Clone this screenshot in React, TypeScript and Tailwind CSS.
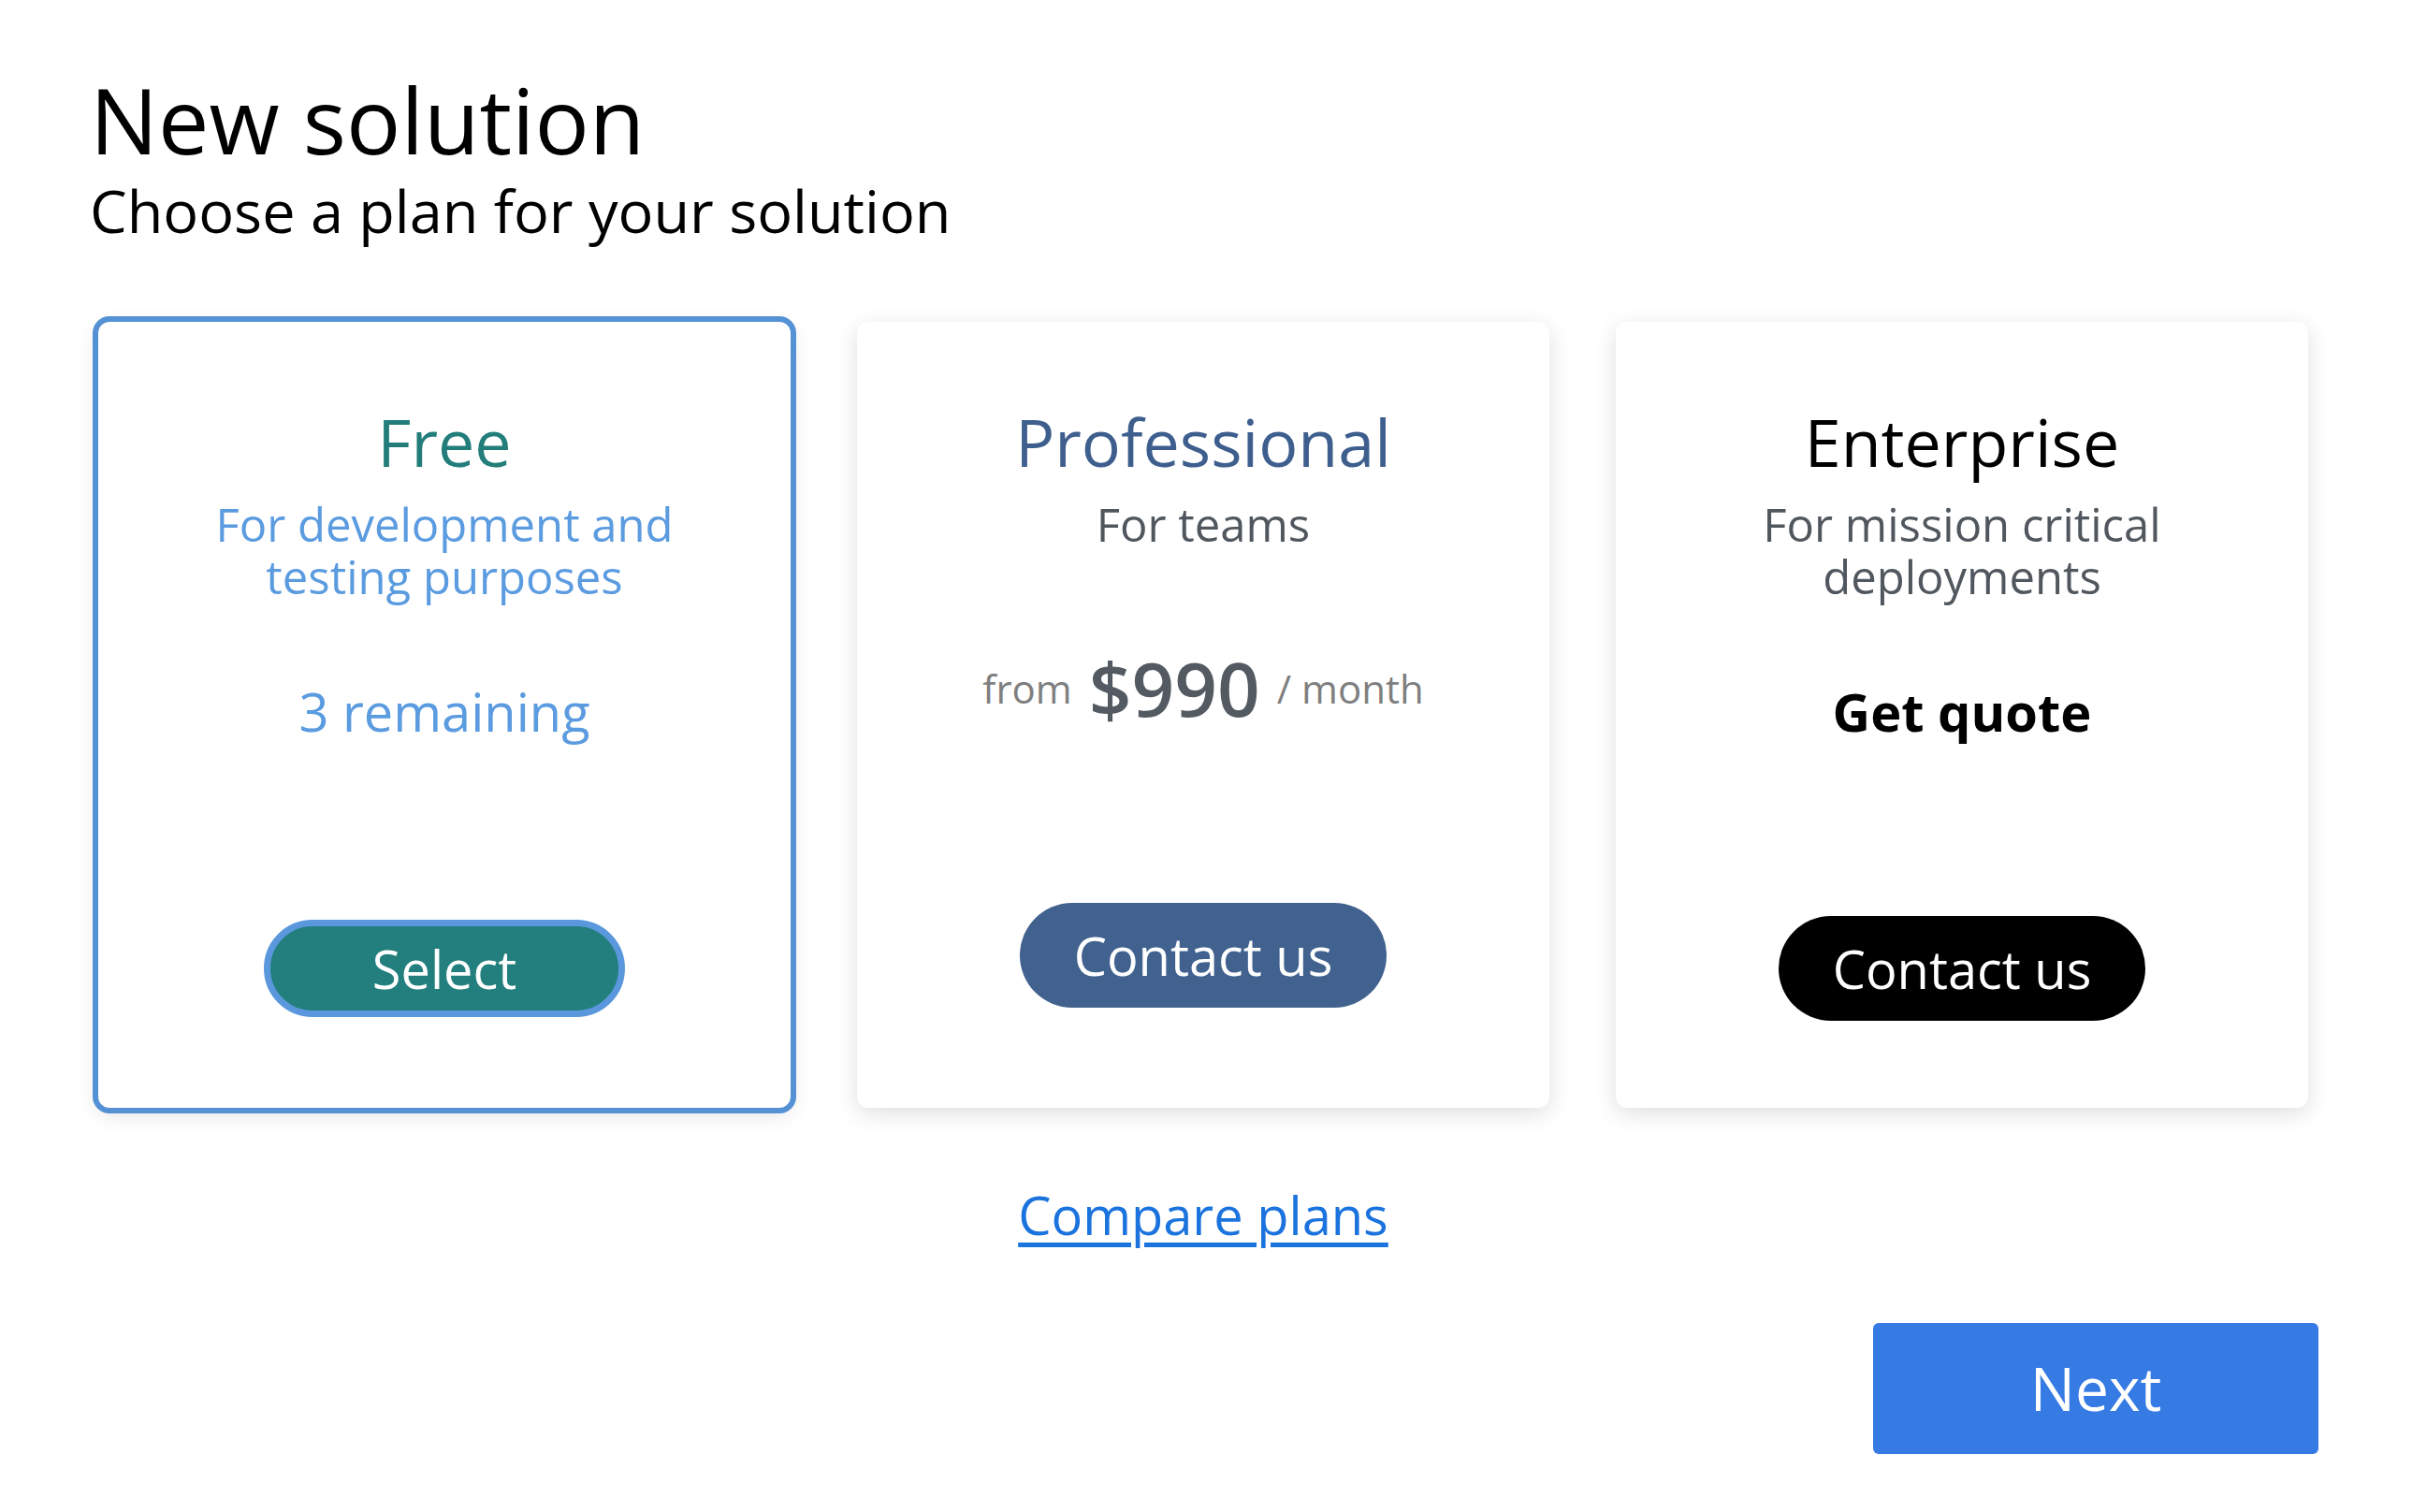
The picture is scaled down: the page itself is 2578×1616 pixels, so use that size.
import React from "react";

const font = "font-['Open_Sans','Noto_Sans',sans-serif]";

export default function App() {
  return (
    <div className={`${font} min-h-screen bg-white pl-[96px] pr-[100px] pt-[67px] text-black`}>
      {/* header */}
      <h1 className="text-[97px] leading-[121px] font-normal">New solution</h1>
      <p className="text-[63px] leading-[73px]">Choose a plan for your solution</p>

      {/* plans */}
      <div className="ml-[9px] mr-[11px] mt-[83px]">
        <div className="grid grid-cols-[740px_740px_740px] gap-x-[71px]">
          {/* Free */}
          <div className="flex h-[840px] flex-col items-center rounded-[12px] bg-white pt-[84px] text-center shadow-[0_6px_24px_rgba(0,0,0,0.13)] outline-[6px] outline-solid outline-[#5591d5]">
            <div className="text-[70px] leading-[88px] text-[#237e7b]">Free</div>
            <div className="mt-[16px] w-[540px] text-[49px] leading-[56px] text-[#5b9be0]">
              For development and testing purposes
            </div>
            <div className="mt-[82px] text-[56px] leading-[68px] text-[#5b9be0]">3 remaining</div>
            <button className="mt-auto mb-[97px] h-[104px] w-[386px] rounded-full border-[7px] border-[#5a97dc] bg-[#237f7d] text-[56px] leading-none text-white">
              Select
            </button>
          </div>

          {/* Professional */}
          <div className="flex h-[840px] flex-col items-center rounded-[12px] bg-white pt-[84px] text-center shadow-[0_6px_24px_rgba(0,0,0,0.13)]">
            <div className="text-[70px] leading-[88px] text-[#3e5f8e]">Professional</div>
            <div className="mt-[16px] text-[49px] leading-[56px] text-[#51575e]">For teams</div>
            <div className="mt-[99px] flex h-[96px] items-center gap-x-[18px]">
              <span className="text-[42px] text-[#7f7f7f]">from</span>
              <span className="text-[80px] font-semibold text-[#535a62]">$990</span>
              <span className="text-[42px] text-[#7f7f7f]">/ month</span>
            </div>
            <button className="mt-auto mb-[107px] h-[112px] w-[392px] rounded-full bg-[#41628f] text-[56px] leading-none text-white">
              Contact us
            </button>
          </div>

          {/* Enterprise */}
          <div className="flex h-[840px] flex-col items-center rounded-[12px] bg-white pt-[84px] text-center shadow-[0_6px_24px_rgba(0,0,0,0.13)]">
            <div className="text-[70px] leading-[88px] text-black">Enterprise</div>
            <div className="mt-[16px] w-[580px] text-[49px] leading-[56px] text-[#51575e]">
              For mission critical deployments
            </div>
            <div className="mt-[82px] text-[56px] font-bold leading-[68px] text-black">Get quote</div>
            <button className="mt-auto mb-[93px] h-[112px] w-[392px] rounded-full bg-black text-[56px] leading-none text-white">
              Contact us
            </button>
          </div>
        </div>

        <div className="mt-[76px] flex justify-center">
          <a href="#" className="text-[56px] leading-[76px] text-[#1b73de] underline decoration-[5px] underline-offset-[8px]">
            Compare plans
          </a>
        </div>
      </div>

      <div className="mt-[78px] flex justify-end">
        <button className="h-[140px] w-[476px] rounded-[6px] bg-[#367ae4] text-[64px] leading-none text-white">
          Next
        </button>
      </div>
    </div>
  );
}
